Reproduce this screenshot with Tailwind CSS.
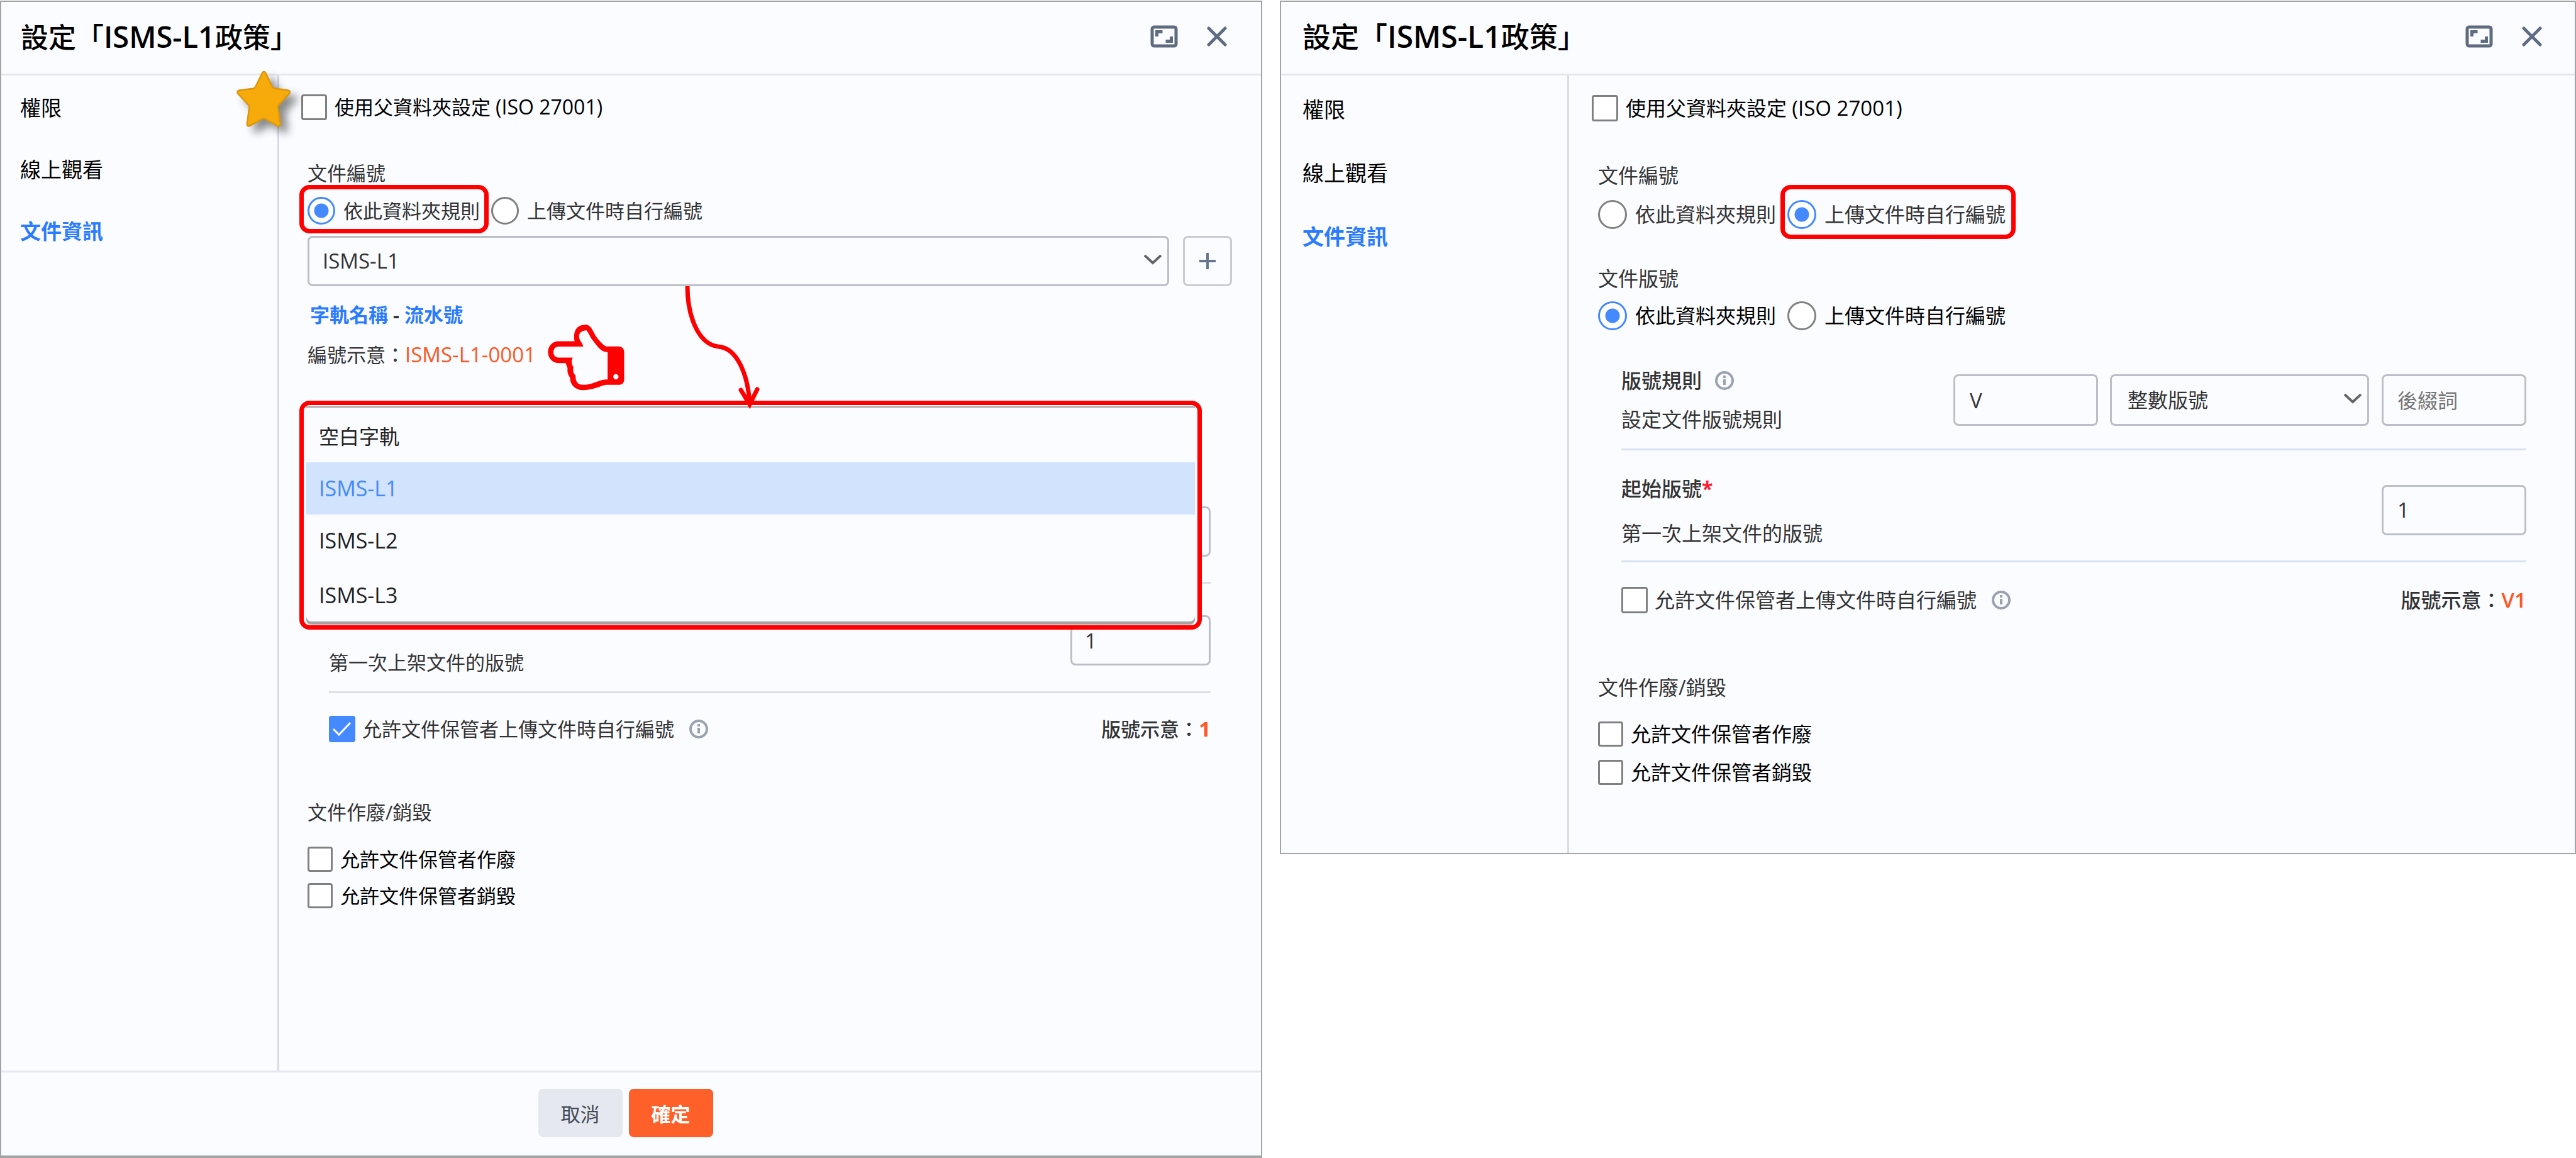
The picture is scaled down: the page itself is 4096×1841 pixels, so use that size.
<!DOCTYPE html>
<html lang="zh-Hant">
<head>
  <meta charset="UTF-8" />
  <meta name="viewport" content="width=device-width, initial-scale=1.0" />
  <title>設定「ISMS-L1政策」</title>
  <script src="https://cdn.jsdelivr.net/npm/@tailwindcss/browser@4"></script>
</head>
<body class="bg-white font-['Open_Sans','Noto_Sans_CJK_TC',sans-serif] text-[#333]">

  <div class="min-h-screen pt-px grid grid-cols-[2007fr_2061fr] gap-7">

    <!-- Left dialog -->
    <section class="flex flex-col bg-[#fafcff] border-2 border-b-4 border-[#a3a3a3]">
      <header class="h-[117px] shrink-0 flex items-center justify-between pb-1 pl-[31px] pr-[54px] border-b-[3px] border-[#e6e8ef]">
        <h1 class="text-[44px] leading-[56px] font-medium text-black">設定「<span class="text-[47px] font-semibold">ISMS-L1</span>政策」</h1>
        <div class="flex items-center gap-[46px] text-[#5f6b80]">
          <button type="button" aria-label="全螢幕">
            <svg class="w-11 h-9" viewBox="0 0 44 36" fill="none" stroke="currentColor" stroke-width="5"><rect x="3" y="3" width="38" height="30" rx="3" /><path d="M10.500 18v-7.500h9M33.500 18v7.500h-9" stroke-width="5" /></svg>
          </button>
          <button type="button" aria-label="關閉">
            <svg class="w-8 h-8" viewBox="0 0 32 32" fill="none" stroke="currentColor" stroke-width="5" stroke-linecap="round"><path d="M3 3l26 26M29 3L3 29" /></svg>
          </button>
        </div>
      </header>

      <div class="flex-1 flex">
        <nav class="w-[442px] shrink-0 border-r-[3px] border-[#d9dce6] pt-8 pl-[30px] flex flex-col items-start gap-[58px] text-[33px] leading-10 text-black">
          <a href="#">權限</a>
          <a href="#">線上觀看</a>
          <a href="#" class="font-bold text-[#2b7bff]">文件資訊</a>
        </nav>

        <main class="flex-1 min-w-0 pt-[30px] pl-[35px] pr-[46px] text-[31px] leading-10">
          <div class="relative">
            <label class="h-10 flex items-center gap-3 text-black">
              <input type="checkbox" class="appearance-none size-[41px] border-[3px] border-[#808080] rounded bg-white" />
              <span>使用父資料夾設定 <span class="text-[32px]">(ISO 27001)</span></span>
            </label>
            <svg class="absolute -left-[103px] -top-[38px] w-[87px] h-[90px] overflow-visible drop-shadow-[11px_10px_7px_rgba(0,0,0,0.45)]" viewBox="55 34 350 361"><path d="M230 41c7 0 10 4 12 9l42 88c3 6 8 9 14 10l86 12c13 2 16 14 8 22l-66 72c-4 5-6 9-5 15l15 106c1 12-8 18-18 13l-81-45c-5-3-10-3-15 0l-81 44c-11 5-20 0-18-13l14-105c1-6-1-11-5-15l-67-72c-8-9-5-19 8-22l90-11c6-1 10-5 13-10l44-89c2-5 4-9 10-9z" fill="#f7ab0a" stroke="#db960c" stroke-width="10" stroke-linejoin="round" /></svg>
          </div>

          <section class="mt-[65px] pl-[10px]">
            <h2>文件編號</h2>
            <div class="mt-[17px] h-[46px] flex items-center gap-[18px]">
              <label class="relative h-full flex items-center gap-[13px]">
                <input type="radio" name="number-left" checked class="appearance-none size-11 rounded-full border-[3px] border-[#808080] bg-white checked:border-[#4489fe] checked:bg-[radial-gradient(circle,#4489fe_11px,transparent_12px)]" />
                依此資料夾規則
                <span class="absolute -left-[13px] -right-[14px] -top-[18px] -bottom-[13px] border-[7px] border-[#ff0000] rounded-2xl"></span>
              </label>
              <label class="flex items-center gap-[13px]">
                <input type="radio" name="number-left" class="appearance-none size-11 rounded-full border-[3px] border-[#808080] bg-white" />
                上傳文件時自行編號
              </label>
            </div>

            <div class="relative mt-[17px] flex gap-[22px]">
              <div class="flex-1 grid items-center">
                <select aria-label="字軌" class="col-start-1 row-start-1 appearance-none w-full h-20 pl-[21px] border-[3px] border-[#bcbfc6] rounded-lg text-[33px]">
                  <option>ISMS-L1</option>
                </select>
                <svg class="col-start-1 row-start-1 justify-self-end mr-3 mb-1 w-7 h-4 pointer-events-none" viewBox="0 0 28 16" fill="none" stroke="#666" stroke-width="4"><path d="M1 1l13 12L27 1" /></svg>
              </div>
              <button type="button" aria-label="新增" class="w-[78px] h-20 grid place-items-center border-[3px] border-[#c9ccd2] rounded-lg text-[#6b7488]">
                <svg class="size-[26px]" viewBox="0 0 26 26" stroke="currentColor" stroke-width="4"><path d="M13 0v26M0 13h26" /></svg>
              </button>

              <!-- opened option list -->
              <div class="absolute z-10 -left-[13px] right-12 top-[262px] border-[7px] border-[#ff0000] rounded-2xl bg-[#fafcff] pt-0.5 px-1">
                <ul class="border-t-2 border-[#a0a0a0] text-[34px] leading-[83px] text-[#222] shadow-[0_5px_0_#a3a3a3] mb-[6px] rounded-b-lg">
                  <li class="pl-5 pt-1 text-[32px]">空白字軌</li>
                  <li class="pl-5 bg-[#d2e3fd] text-[#4489fe]">ISMS-L1</li>
                  <li class="pl-5">ISMS-L2</li>
                  <li class="pl-5 pt-1">ISMS-L3</li>
                </ul>
              </div>
              <svg class="absolute z-20 left-[580px] top-20 w-[150px] h-[195px]" viewBox="0 0 150 195" fill="none" stroke="#ff0000" stroke-width="7" stroke-linecap="round"><path d="M24 0C24 45 40 92 73 96C103 98 120 140 123 186" /><path d="M109 165l14 23 12-24" /></svg>
            </div>

            <p class="mt-[25px] pl-1 font-bold"><span class="text-[#2b7bff]">字軌名稱</span> - <span class="text-[#2b7bff]">流水號</span></p>
            <p class="relative mt-6">編號示意：<span class="text-[33px] text-[#ff5722]">ISMS-L1-0001</span>
              <svg class="absolute left-[382px] -top-7 w-[122px] h-[105px]" viewBox="50 46 492 424"><path fill-rule="evenodd" fill="#ff0000" d="M222 153C212 98 226 48 292 47C310 47 322 58 330 70C345 92 352 112 362 126C380 150 405 177 422 186H505C526 186 540 202 540 220V400C540 420 525 433 505 433H430C395 433 350 467 278 467C225 467 193 432 193 388C178 368 173 345 177 325C171 314 168 304 166 293H118C78 293 51 260 51 223C51 185 78 153 118 153zM278 187H118C98 187 86 204 86 223C86 242 98 258 118 258H210C200 278 201 300 215 320C209 340 212 358 228 373C227 412 240 433 278 433C340 433 375 398 434 398V223C390 225 365 180 334 142C322 125 312 100 299 83C262 83 242 105 254 140C260 157 270 160 278 187zM504 381a17 17 0 1 0-34 0 17 17 0 1 0 34 0z" /></svg>
            </p>
          </section>

          <section class="mt-[221px] pl-11 pr-[34px]">
            <div class="pb-10 flex justify-end border-b-[3px] border-[#dcdfe8]">
              <input type="text" aria-label="後綴詞" class="w-[223px] h-20 px-[22px] border-[3px] border-[#bcbfc6] rounded-lg" />
            </div>
            <div class="h-[174px] pt-[50px] pb-[26px] flex justify-between border-b-[3px] border-[#dcdfe8]">
              <label for="start-left" class="self-end">第一次上架文件的版號</label>
              <input id="start-left" type="text" value="1" class="w-[223px] h-20 px-5 border-[3px] border-[#bcbfc6] rounded-lg text-[33px]" />
            </div>
            <div class="mt-9 h-[42px] flex items-center">
              <label class="flex items-center gap-[11px]">
                <span class="grid">
                  <input type="checkbox" checked class="col-start-1 row-start-1 appearance-none size-[42px] rounded bg-[#4489fe]" />
                  <svg class="col-start-1 row-start-1 size-[42px] pointer-events-none" viewBox="0 0 42 42" fill="none" stroke="#fff" stroke-width="3"><path d="M7 21l9 9L34 11" /></svg>
                </span>
                允許文件保管者上傳文件時自行編號
              </label>
              <svg class="ml-6 size-[30px]" viewBox="0 0 30 30" fill="none" stroke="#9aa2b1" stroke-width="4"><circle cx="15" cy="15" r="13" /><path d="M15 7v4M15 13v9" stroke-width="4" /></svg>
              <p class="ml-auto font-medium">版號示意：<span class="text-[33px] font-bold text-[#ff5722]">1</span></p>
            </div>
          </section>

          <section class="mt-[91px] pl-[10px]">
            <h2>文件作廢/銷毀</h2>
            <label class="mt-[35px] h-10 flex items-center gap-3 text-black">
              <input type="checkbox" class="appearance-none size-10 border-[3px] border-[#808080] rounded bg-white" />
              允許文件保管者作廢
            </label>
            <label class="mt-[18px] h-10 flex items-center gap-3 text-black">
              <input type="checkbox" class="appearance-none size-10 border-[3px] border-[#808080] rounded bg-white" />
              允許文件保管者銷毀
            </label>
          </section>
        </main>
      </div>

      <footer class="h-[135px] shrink-0 pt-[26px] pr-[18px] flex items-start justify-center gap-[10px] border-t-[3px] border-[#e6e8ef] text-[31px]">
        <button type="button" class="w-[134px] h-[77px] pt-1 rounded-lg bg-[#e5e8ee] text-[#444a57]">取消</button>
        <button type="button" class="w-[134px] h-[77px] pt-1 rounded-lg bg-[#ff5f28] text-white font-bold">確定</button>
      </footer>
    </section>

    <!-- Right dialog -->
    <section class="self-start flex flex-col bg-[#fafcff] border-2 border-[#a3a3a3]">
      <header class="h-[117px] shrink-0 flex items-center justify-between pb-1 pl-[34px] pr-[52px] border-b-[3px] border-[#e6e8ef]">
        <h1 class="text-[45px] leading-[56px] font-medium text-black">設定「<span class="text-[48px] font-semibold">ISMS-L1</span>政策」</h1>
        <div class="flex items-center gap-[46px] text-[#5f6b80]">
          <button type="button" aria-label="全螢幕">
            <svg class="w-11 h-9" viewBox="0 0 44 36" fill="none" stroke="currentColor" stroke-width="5"><rect x="3" y="3" width="38" height="30" rx="3" /><path d="M10.500 18v-7.500h9M33.500 18v7.500h-9" stroke-width="5" /></svg>
          </button>
          <button type="button" aria-label="關閉">
            <svg class="w-8 h-8" viewBox="0 0 32 32" fill="none" stroke="currentColor" stroke-width="5" stroke-linecap="round"><path d="M3 3l26 26M29 3L3 29" /></svg>
          </button>
        </div>
      </header>

      <div class="flex">
        <nav class="w-[458px] shrink-0 border-r-[3px] border-[#d9dce6] pt-[34px] pl-[34px] flex flex-col items-start gap-[61px] text-[34px] leading-10 text-black">
          <a href="#">權限</a>
          <a href="#">線上觀看</a>
          <a href="#" class="font-bold text-[#2b7bff]">文件資訊</a>
        </nav>

        <main class="flex-1 min-w-0 pt-[31px] pb-[108px] pl-9 pr-[77px] text-[32px] leading-10">
          <label class="h-[42px] flex items-center gap-3 text-black">
            <input type="checkbox" class="appearance-none size-[42px] border-[3px] border-[#808080] rounded bg-white" />
            <span>使用父資料夾設定 <span class="text-[33px]">(ISO 27001)</span></span>
          </label>

          <section class="mt-[66px] pl-[10px]">
            <h2>文件編號</h2>
            <div class="mt-[19px] h-[46px] flex items-center gap-[18px]">
              <label class="flex items-center gap-[13px]">
                <input type="radio" name="number-right" class="appearance-none size-[46px] rounded-full border-[3px] border-[#808080] bg-white" />
                依此資料夾規則
              </label>
              <label class="relative h-full flex items-center gap-[13px]">
                <input type="radio" name="number-right" checked class="appearance-none size-[46px] rounded-full border-[3px] border-[#808080] bg-white checked:border-[#4489fe] checked:bg-[radial-gradient(circle,#4489fe_11px,transparent_12px)]" />
                上傳文件時自行編號
                <span class="absolute -left-[11px] -right-4 -top-6 -bottom-4 border-[7px] border-[#ff0000] rounded-2xl"></span>
              </label>
            </div>
          </section>

          <section class="mt-[59px] pl-[10px]">
            <h2>文件版號</h2>
            <div class="mt-4 h-[46px] flex items-center gap-[18px] text-black">
              <label class="flex items-center gap-[13px]">
                <input type="radio" name="version-right" checked class="appearance-none size-[46px] rounded-full border-[3px] border-[#808080] bg-white checked:border-[#4489fe] checked:bg-[radial-gradient(circle,#4489fe_11px,transparent_12px)]" />
                依此資料夾規則
              </label>
              <label class="flex items-center gap-[13px]">
                <input type="radio" name="version-right" class="appearance-none size-[46px] rounded-full border-[3px] border-[#808080] bg-white" />
                上傳文件時自行編號
              </label>
            </div>
          </section>

          <section class="mt-[60px] pl-[47px]">
            <div class="pb-[26px] flex items-center justify-between border-b-[3px] border-[#dae2f1]">
              <div>
                <h3 class="flex items-center font-medium">版號規則
                  <svg class="ml-[21px] size-[30px]" viewBox="0 0 30 30" fill="none" stroke="#9aa2b1" stroke-width="4"><circle cx="15" cy="15" r="13" /><path d="M15 7v4M15 13v9" stroke-width="4" /></svg>
                </h3>
                <p class="mt-[22px]">設定文件版號規則</p>
              </div>
              <div class="flex">
                <input type="text" aria-label="前綴詞" value="V" class="w-[230px] h-[82px] px-[23px] border-[3px] border-[#bcbfc6] rounded-lg text-[33px]" />
                <div class="ml-[19px] w-[412px] grid items-center">
                  <select aria-label="版號格式" class="col-start-1 row-start-1 appearance-none w-full h-[82px] pl-[25px] border-[3px] border-[#bcbfc6] rounded-lg">
                    <option>整數版號</option>
                  </select>
                  <svg class="col-start-1 row-start-1 justify-self-end mr-3 mb-1 w-7 h-4 pointer-events-none" viewBox="0 0 28 16" fill="none" stroke="#666" stroke-width="4"><path d="M1 1l13 12L27 1" /></svg>
                </div>
                <input type="text" aria-label="後綴詞" placeholder="後綴詞" class="ml-5 w-[230px] h-[82px] px-[22px] border-[3px] border-[#bcbfc6] rounded-lg placeholder:text-[#757575]" />
              </div>
            </div>
            <div class="pt-[41px] pb-[23px] flex items-center justify-between border-b-[3px] border-[#dae2f1]">
              <div>
                <label for="start-right" class="block font-medium">起始版號<span class="font-bold text-[#ff1a2e]">*</span></label>
                <p class="mt-[31px]">第一次上架文件的版號</p>
              </div>
              <input id="start-right" type="text" value="1" class="w-[230px] h-20 mb-1 px-[22px] border-[3px] border-[#bcbfc6] rounded-lg text-[33px]" />
            </div>
            <div class="mt-[39px] h-[42px] flex items-center">
              <label class="flex items-center gap-[11px]">
                <input type="checkbox" class="appearance-none size-[42px] border-[3px] border-[#808080] rounded bg-white" />
                允許文件保管者上傳文件時自行編號
              </label>
              <svg class="ml-6 size-[30px]" viewBox="0 0 30 30" fill="none" stroke="#9aa2b1" stroke-width="4"><circle cx="15" cy="15" r="13" /><path d="M15 7v4M15 13v9" stroke-width="4" /></svg>
              <p class="ml-auto font-medium">版號示意：<span class="text-[33px] font-semibold text-[#ff5722]">V1</span></p>
            </div>
          </section>

          <section class="mt-[98px] pl-[10px]">
            <h2>文件作廢/銷毀</h2>
            <label class="mt-[34px] h-10 flex items-center gap-3 text-black">
              <input type="checkbox" class="appearance-none size-10 border-[3px] border-[#808080] rounded bg-white" />
              允許文件保管者作廢
            </label>
            <label class="mt-[21px] h-10 flex items-center gap-3 text-black">
              <input type="checkbox" class="appearance-none size-10 border-[3px] border-[#808080] rounded bg-white" />
              允許文件保管者銷毀
            </label>
          </section>
        </main>
      </div>
    </section>

  </div>

</body>
</html>
